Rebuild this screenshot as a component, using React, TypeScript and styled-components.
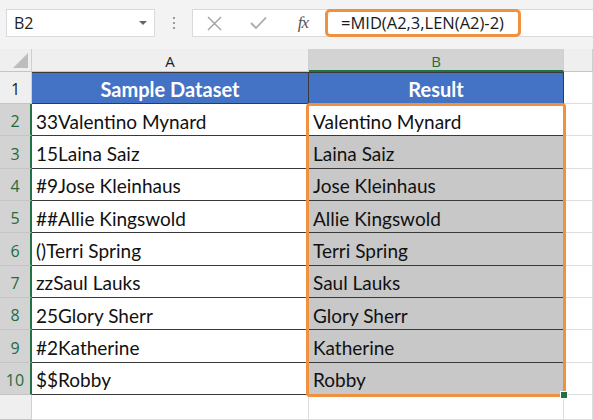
import React from 'react'
import styled, { createGlobalStyle } from 'styled-components'

const GlobalStyle = createGlobalStyle`
  html, body {
    margin: 0;
    padding: 0;
    background: #ffffff;
  }
  body {
    width: 593px;
    height: 420px;
    overflow: hidden;
  }
`

const Page = styled.div`
  width: 593px;
  height: 420px;
  display: flex;
  flex-direction: column;
  background: #ffffff;
  overflow: hidden;
`

const Toolbar = styled.div`
  height: 49px;
  flex: none;
  display: flex;
  align-items: flex-start;
  padding-top: 9px;
  padding-left: 6px;
  box-sizing: border-box;
  background: #f3f3f3;
  font-family: 'Open Sans', 'Noto Sans', sans-serif;
`

const NameBox = styled.div`
  width: 149px;
  height: 28px;
  box-sizing: border-box;
  display: flex;
  align-items: center;
  justify-content: space-between;
  padding: 0 7px 0 7px;
  background: #ffffff;
  border: 1px solid #dadada;
  font-size: 16px;
  color: #222;
`

const DropArrow = styled.span`
  width: 0;
  height: 0;
  border-left: 4px solid transparent;
  border-right: 4px solid transparent;
  border-top: 4px solid #666;
`

const Dots = styled.div`
  width: 37px;
  height: 28px;
  display: flex;
  flex-direction: column;
  align-items: center;
  justify-content: center;
  gap: 3px;
  span {
    width: 2px;
    height: 2px;
    background: #9a9a9a;
  }
`

const FormulaBox = styled.div`
  flex: 1;
  height: 28px;
  box-sizing: border-box;
  display: flex;
  align-items: center;
  background: #ffffff;
  border: 1px solid #dadada;
  border-right: none;
`

const IconSlot = styled.div<{ $w: number }>`
  width: ${({ $w }) => $w}px;
  height: 26px;
  display: flex;
  align-items: center;
  justify-content: center;
  flex: none;
`

const Fx = styled.span`
  font-family: 'Liberation Serif', 'DejaVu Serif', serif;
  font-style: italic;
  font-size: 17px;
  color: #555;
  letter-spacing: -1px;
`

const Formula = styled.div`
  height: 28px;
  margin-top: -1px;
  box-sizing: border-box;
  width: 196px;
  border: 3px solid #f0913f;
  border-radius: 5px;
  display: flex;
  align-items: center;
  padding-left: 13px;
  font-size: 16.5px;
  color: #1a1a1a;
  background: #ffffff;
`

const Sheet = styled.div`
  flex: 1;
  display: grid;
  grid-template-columns: 32px 277px 255px 1fr;
  grid-template-rows: 23px 32px repeat(9, 32.33px) 1fr;
  font-family: 'Lato', 'Liberation Sans', sans-serif;
`

const Corner = styled.div`
  grid-row: 1;
  grid-column: 1;
  background: #efefef;
  border-right: 1px solid #cfcfcf;
  border-bottom: 1px solid #c4c4c4;
  box-sizing: border-box;
  display: flex;
  align-items: flex-end;
  justify-content: flex-end;
  padding: 0 3px 3px 0;
`

const Triangle = styled.span`
  width: 0;
  height: 0;
  border-left: 15px solid transparent;
  border-bottom: 15px solid #bdbdbd;
`

const ColHead = styled.div<{ $col: number; $sel?: boolean }>`
  grid-row: 1;
  grid-column: ${({ $col }) => $col};
  box-sizing: border-box;
  background: ${({ $sel }) => ($sel ? '#d3d3d3' : '#efefef')};
  color: ${({ $sel }) => ($sel ? '#1f6b3c' : '#222')};
  border-right: 1px solid #cfcfcf;
  border-bottom: ${({ $sel }) => ($sel ? '2px solid #217346' : '1px solid #c4c4c4')};
  display: flex;
  align-items: center;
  justify-content: center;
  font-family: 'Open Sans', 'Noto Sans', sans-serif;
  font-size: 15px;
  padding-top: 2px;
`

const RowHead = styled.div<{ $row: number; $sel?: boolean }>`
  grid-row: ${({ $row }) => $row};
  grid-column: 1;
  box-sizing: border-box;
  background: ${({ $sel }) => ($sel ? '#d3d3d3' : '#efefef')};
  color: ${({ $sel }) => ($sel ? '#1f6b3c' : '#222')};
  border-bottom: 1px solid #c4c4c4;
  border-right: ${({ $sel }) => ($sel ? '2px solid #217346' : '1px solid #cfcfcf')};
  display: flex;
  align-items: flex-end;
  justify-content: center;
  padding-bottom: 3px;
  font-family: 'Open Sans', 'Noto Sans', sans-serif;
  font-size: 16px;
`

type Kind = 'head' | 'plain' | 'sel' | 'active' | 'empty'

const Cell = styled.div<{ $kind: Kind; $row: number; $col: number }>`
  grid-row: ${({ $row }) => $row};
  grid-column: ${({ $col }) => $col};
  box-sizing: border-box;
  display: flex;
  align-items: center;
  padding: 3px 0 0 4px;
  font-size: 19px;
  color: #111;
  white-space: nowrap;
  overflow: hidden;
  background: ${({ $kind }) =>
    $kind === 'head' ? '#4472c4' : $kind === 'sel' ? '#c8c8c8' : '#ffffff'};
  border-right: 1px solid
    ${({ $kind }) => ($kind === 'empty' ? '#dedede' : '#3a3a3a')};
  border-bottom: 1px solid
    ${({ $kind }) => ($kind === 'empty' ? '#dedede' : '#3a3a3a')};
  ${({ $kind }) =>
    $kind === 'head' &&
    `
    justify-content: center;
    padding: 2px 0 0 0;
    color: #ffffff;
    font-weight: 700;
    font-size: 20px;
    border-top: 1px solid #3a3a3a;
  `}
`

const Selection = styled.div`
  grid-column: 3;
  grid-row: 3 / 12;
  margin: -1px -2px -2px -3px;
  border: 3px solid #f0913f;
  border-radius: 4px;
  pointer-events: none;
  position: relative;
  z-index: 2;
`

const FillHandle = styled.span`
  position: absolute;
  right: -5px;
  bottom: -5px;
  width: 6px;
  height: 6px;
  background: #217346;
  border: 1px solid #ffffff;
`

const rows: [string, string][] = [
  ['33Valentino Mynard', 'Valentino Mynard'],
  ['15Laina Saiz', 'Laina Saiz'],
  ['#9Jose Kleinhaus', 'Jose Kleinhaus'],
  ['##Allie Kingswold', 'Allie Kingswold'],
  ['()Terri Spring', 'Terri Spring'],
  ['zzSaul Lauks', 'Saul Lauks'],
  ['25Glory Sherr', 'Glory Sherr'],
  ['#2Katherine', 'Katherine'],
  ['$$Robby', 'Robby'],
]

export default function App() {
  return (
    <Page>
      <GlobalStyle />
      <Toolbar>
        <NameBox>
          <span>B2</span>
          <DropArrow />
        </NameBox>
        <Dots>
          <span />
          <span />
          <span />
        </Dots>
        <FormulaBox>
          <IconSlot $w={42}>
            <svg width="15" height="15" viewBox="0 0 15 15">
              <path d="M1 1 L14 14 M14 1 L1 14" stroke="#a0a0a0" strokeWidth="1.4" fill="none" />
            </svg>
          </IconSlot>
          <IconSlot $w={46}>
            <svg width="17" height="14" viewBox="0 0 17 14">
              <path d="M1 7 L6 12 L16 1.5" stroke="#a8a8a8" strokeWidth="1.8" fill="none" />
            </svg>
          </IconSlot>
          <IconSlot $w={44}>
            <Fx>fx</Fx>
          </IconSlot>
          <Formula>=MID(A2,3,LEN(A2)-2)</Formula>
        </FormulaBox>
      </Toolbar>
      <Sheet>
        <Corner>
          <Triangle />
        </Corner>
        <ColHead $col={2}>A</ColHead>
        <ColHead $col={3} $sel>B</ColHead>
        <ColHead $col={4} />

        <RowHead $row={2}>1</RowHead>
        <Cell $kind="head" $row={2} $col={2}>Sample Dataset</Cell>
        <Cell $kind="head" $row={2} $col={3}>Result</Cell>
        <Cell $kind="empty" $row={2} $col={4} />

        {rows.map(([src, res], i) => (
          <React.Fragment key={src}>
            <RowHead $row={i + 3} $sel>{i + 2}</RowHead>
            <Cell $kind="plain" $row={i + 3} $col={2}>{src}</Cell>
            <Cell $kind={i === 0 ? 'active' : 'sel'} $row={i + 3} $col={3}>{res}</Cell>
            <Cell $kind="empty" $row={i + 3} $col={4} />
          </React.Fragment>
        ))}

        <RowHead $row={12} />
        <Cell $kind="empty" $row={12} $col={2} />
        <Cell $kind="empty" $row={12} $col={3} />
        <Cell $kind="empty" $row={12} $col={4} />

        <Selection>
          <FillHandle />
        </Selection>
      </Sheet>
    </Page>
  )
}
